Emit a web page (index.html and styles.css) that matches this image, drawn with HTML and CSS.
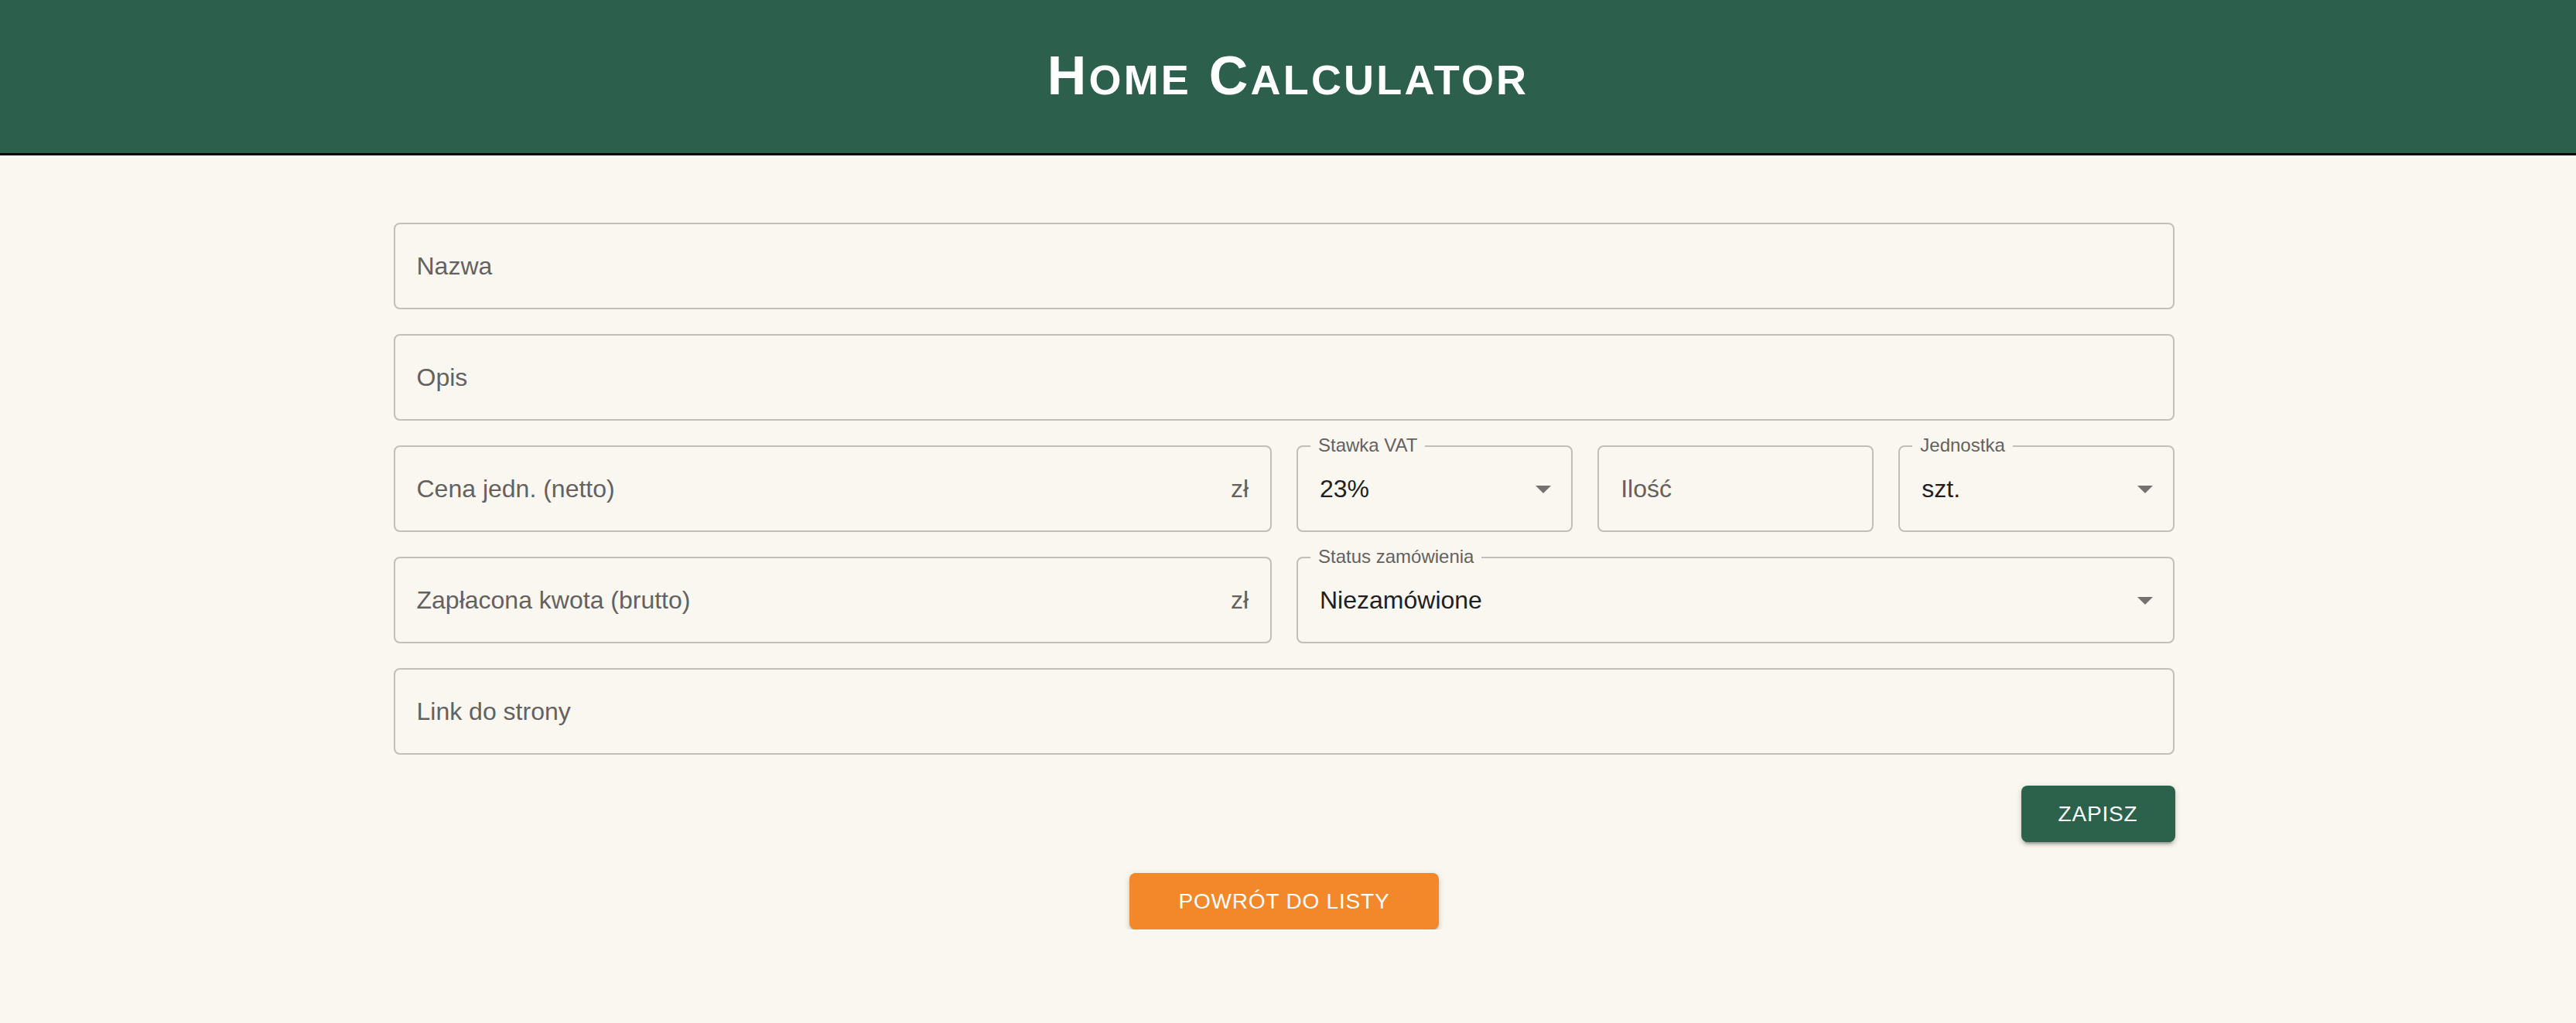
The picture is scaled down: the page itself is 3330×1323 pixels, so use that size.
FILE: index.html
```html
<!DOCTYPE html>
<html lang="pl">
<head>
<meta charset="utf-8">
<title>Home Calculator</title>
<link rel="stylesheet" href="styles.css">
</head>
<body>
<header class="topbar">
  <h1 class="title"><span class="cap">H</span><span class="sc">ome</span> <span class="cap">C</span><span class="sc">alculator</span></h1>
</header>
<main class="page">
  <div class="container">
    <form class="form-grid">
      <div class="field span-12"><span class="ph">Nazwa</span></div>
      <div class="field span-12"><span class="ph">Opis</span></div>
      <div class="field span-6"><span class="ph grow">Cena jedn. (netto)</span><span class="adorn">zł</span></div>
      <div class="field select span-2">
        <span class="notch">Stawka VAT</span>
        <span class="value grow">23%</span>
        <svg class="arrow" viewBox="0 0 24 24" width="48" height="48"><path d="M7 10l5 5 5-5z"/></svg>
      </div>
      <div class="field span-2"><span class="ph">Ilość</span></div>
      <div class="field select span-2">
        <span class="notch">Jednostka</span>
        <span class="value grow">szt.</span>
        <svg class="arrow" viewBox="0 0 24 24" width="48" height="48"><path d="M7 10l5 5 5-5z"/></svg>
      </div>
      <div class="field span-6"><span class="ph grow">Zapłacona kwota (brutto)</span><span class="adorn">zł</span></div>
      <div class="field select span-6">
        <span class="notch">Status zamówienia</span>
        <span class="value grow">Niezamówione</span>
        <svg class="arrow" viewBox="0 0 24 24" width="48" height="48"><path d="M7 10l5 5 5-5z"/></svg>
      </div>
      <div class="field span-12"><span class="ph">Link do strony</span></div>
    </form>
    <div class="actions">
      <button type="button" class="btn btn-save">ZAPISZ</button>
    </div>
  </div>
  <div class="back-row">
    <button type="button" class="btn btn-back">POWRÓT DO LISTY</button>
  </div>
</main>
</body>
</html>
```

FILE: styles.css
```css
* { box-sizing: border-box; }

html, body {
  margin: 0;
  padding: 0;
  background: #faf6f0;
  font-family: "Liberation Sans", Arial, sans-serif;
}

.topbar {
  height: 201px;
  background: #2c604c;
  border-bottom: 3px solid #000;
  display: flex;
  align-items: center;
  justify-content: center;
  padding-bottom: 3px;
}

.title {
  margin: 0;
  color: #ffffff;
  font-family: "Liberation Sans", Arial, sans-serif;
  font-weight: 700;
  font-size: 70px;
  line-height: 1;
  letter-spacing: 3.2px;
}

.title .sc {
  font-size: 54px;
  text-transform: uppercase;
}

.page {
  padding-top: 87px;
  padding-right: 10px;
}

.container {
  width: 2303px;
  margin: 0 auto;
}

.form-grid {
  display: grid;
  grid-template-columns: repeat(12, 1fr);
  column-gap: 32px;
  row-gap: 32px;
  margin: 0;
}

.span-12 { grid-column: span 12; }
.span-6 { grid-column: span 6; }
.span-2 { grid-column: span 2; }

.field {
  position: relative;
  height: 112px;
  border: 2px solid #c2beb9;
  border-radius: 8px;
  padding: 0 28px;
  display: flex;
  align-items: center;
  font-size: 32px;
  color: #646260;
}

.field.select {
  padding-right: 12px;
}

.grow { flex: 1; }

.ph {
  color: #646260;
  white-space: nowrap;
}

.value {
  color: #211f1e;
  white-space: nowrap;
}

.adorn {
  color: #646260;
  margin-left: 16px;
}

.notch {
  position: absolute;
  top: -14px;
  left: 16px;
  padding: 0 10px;
  background: #faf6f0;
  font-size: 24px;
  line-height: 24px;
  color: #646260;
  white-space: nowrap;
}

.arrow {
  flex: none;
  fill: #747170;
}

.actions {
  display: flex;
  justify-content: flex-end;
  margin-top: 40px;
}

.btn {
  height: 73px;
  border: none;
  border-radius: 8px;
  color: #ffffff;
  font-family: "Liberation Sans", Arial, sans-serif;
  font-size: 28px;
  letter-spacing: 0.8px;
  padding: 0;
  cursor: pointer;
  box-shadow: 0 6px 2px -4px rgba(0,0,0,0.2), 0 4px 4px 0 rgba(0,0,0,0.14), 0 2px 10px 0 rgba(0,0,0,0.12);
}

.btn-save {
  width: 199px;
  background: #2c614c;
}

.back-row {
  display: flex;
  justify-content: center;
  margin-top: 40px;
}

.btn-back {
  width: 400px;
  background: #f3882b;
}
```
